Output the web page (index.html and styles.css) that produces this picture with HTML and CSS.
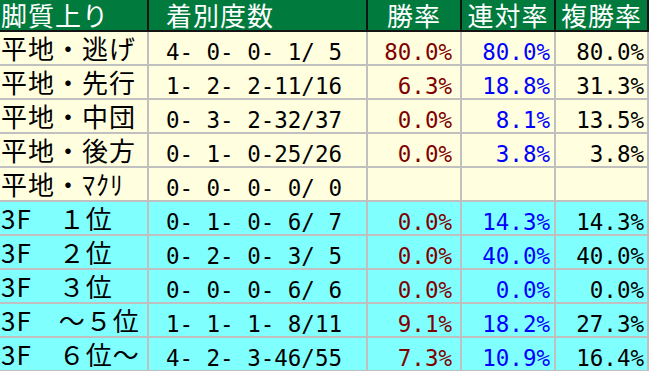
FILE: index.html
```html
<!DOCTYPE html>
<html lang="ja">
<head>
<meta charset="utf-8">
<title>脚質上り</title>
<link rel="stylesheet" href="styles.css">
</head>
<body>
<div class="table">
  <div class="th c1">脚質上り</div>
  <div class="th c2">着別度数</div>
  <div class="th c3">勝率</div>
  <div class="th c4">連対率</div>
  <div class="th c5">複勝率</div>

  <div class="td c1 y">平地・逃げ</div>
  <div class="td c2 y num">4- 0- 0- 1/ 5</div>
  <div class="td c3 y num red">80.0%</div>
  <div class="td c4 y num blue">80.0%</div>
  <div class="td c5 y num">80.0%</div>

  <div class="td c1 y">平地・先行</div>
  <div class="td c2 y num">1- 2- 2-11/16</div>
  <div class="td c3 y num red">6.3%</div>
  <div class="td c4 y num blue">18.8%</div>
  <div class="td c5 y num">31.3%</div>

  <div class="td c1 y">平地・中団</div>
  <div class="td c2 y num">0- 3- 2-32/37</div>
  <div class="td c3 y num red">0.0%</div>
  <div class="td c4 y num blue">8.1%</div>
  <div class="td c5 y num">13.5%</div>

  <div class="td c1 y">平地・後方</div>
  <div class="td c2 y num">0- 1- 0-25/26</div>
  <div class="td c3 y num red">0.0%</div>
  <div class="td c4 y num blue">3.8%</div>
  <div class="td c5 y num">3.8%</div>

  <div class="td c1 y">平地・ﾏｸﾘ</div>
  <div class="td c2 y num">0- 0- 0- 0/ 0</div>
  <div class="td c3 y num red"></div>
  <div class="td c4 y num blue"></div>
  <div class="td c5 y num"></div>

  <div class="td c1 b">3F　１位</div>
  <div class="td c2 b num">0- 1- 0- 6/ 7</div>
  <div class="td c3 b num red">0.0%</div>
  <div class="td c4 b num blue">14.3%</div>
  <div class="td c5 b num">14.3%</div>

  <div class="td c1 b">3F　２位</div>
  <div class="td c2 b num">0- 2- 0- 3/ 5</div>
  <div class="td c3 b num red">0.0%</div>
  <div class="td c4 b num blue">40.0%</div>
  <div class="td c5 b num">40.0%</div>

  <div class="td c1 b">3F　３位</div>
  <div class="td c2 b num">0- 0- 0- 6/ 6</div>
  <div class="td c3 b num red">0.0%</div>
  <div class="td c4 b num blue">0.0%</div>
  <div class="td c5 b num">0.0%</div>

  <div class="td c1 b">3F　～５位</div>
  <div class="td c2 b num">1- 1- 1- 8/11</div>
  <div class="td c3 b num red">9.1%</div>
  <div class="td c4 b num blue">18.2%</div>
  <div class="td c5 b num">27.3%</div>

  <div class="td c1 b">3F　６位～</div>
  <div class="td c2 b num">4- 2- 3-46/55</div>
  <div class="td c3 b num red">7.3%</div>
  <div class="td c4 b num blue">10.9%</div>
  <div class="td c5 b num">16.4%</div>
</div>
</body>
</html>
```

FILE: styles.css
```css
html, body {
  margin: 0;
  padding: 0;
  background: #ffffff;
  overflow: hidden;
}

.table {
  display: grid;
  grid-template-columns: 149px 219px 94px 94px 93px;
  grid-template-rows: 32px repeat(10, 34px);
  width: 649px;
}

.th, .td {
  box-sizing: border-box;
  white-space: pre;
  overflow: visible;
}

.th {
  background: #007a3d;
  color: #ffffff;
  font-family: "Noto Sans CJK JP", sans-serif;
  font-size: 26px;
  letter-spacing: 1px;
  line-height: 29px;
  border-right: 2px solid #141414;
  border-bottom: 2px solid #141414;
  text-align: center;
}

.th.c1 {
  text-align: left;
  padding-left: 1px;
}

.th.c2 {
  text-align: left;
  padding-left: 17px;
}

.td {
  border-right: 2px solid #c0c0c0;
  border-bottom: 2px solid #c0c0c0;
  color: #000000;
  font-family: "Noto Sans CJK JP", sans-serif;
  font-size: 26px;
  letter-spacing: 1px;
  line-height: 32px;
  padding-left: 1px;
}

.td.y { background: #ffffe0; }
.td.b { background: #80ffff; }

.td.num {
  font-family: "DejaVu Sans Mono", monospace;
  font-size: 22.5px;
  letter-spacing: 0;
  line-height: 32px;
  padding-top: 4px;
  text-align: right;
}

.td.c2 { padding-right: 24px; }
.td.c3 { padding-right: 8px; }
.td.c4 { padding-right: 4px; }
.td.c5 { padding-right: 3px; }

.red { color: #800000; }
.blue { color: #0000ff; }
```
